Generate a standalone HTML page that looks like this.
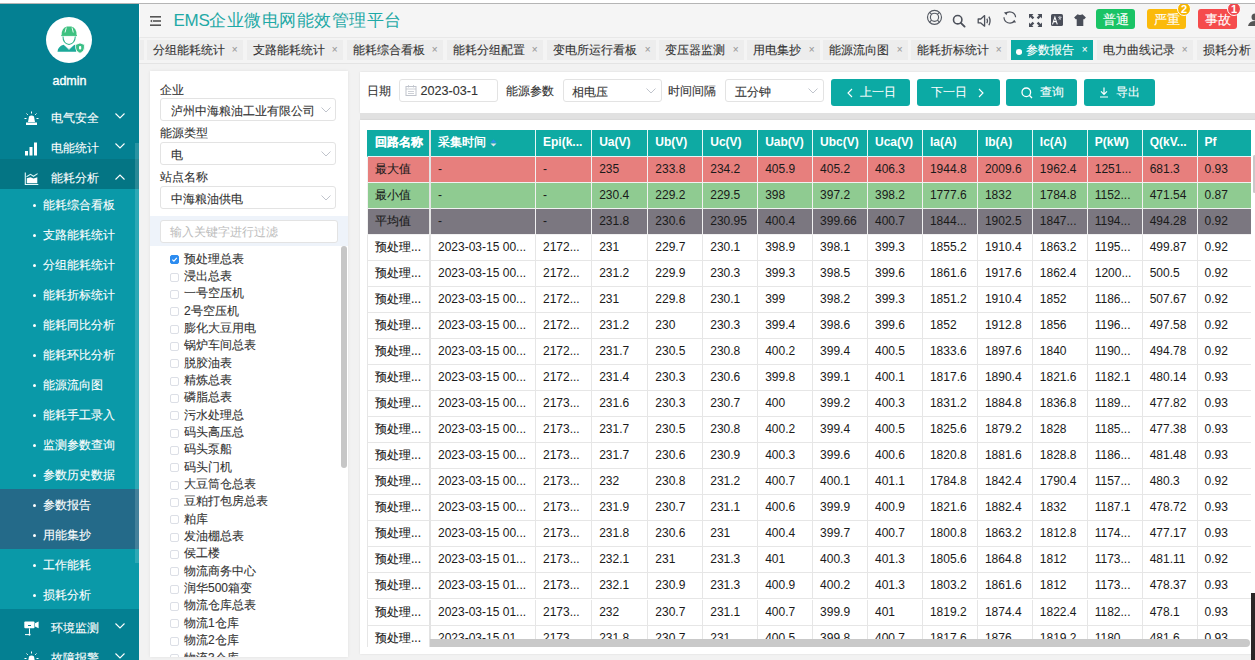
<!DOCTYPE html>
<html><head><meta charset="utf-8">
<style>
*{box-sizing:border-box;margin:0;padding:0}
html,body{width:1255px;height:660px;overflow:hidden;background:#fff;font-family:"Liberation Sans",sans-serif;font-size:12px;color:#333}
.tn,.tab,.lbl,.sel,.tl,.inp span,.c0,.si .t,.mi .t,.btn span,.hbtn{-webkit-text-stroke:.1px currentColor}
.abs{position:absolute}
#topline{left:0;top:3px;width:1255px;height:1px;background:#b5b5b5;z-index:5}
#topwhite{left:0;top:0;width:1255px;height:3px;background:#fff;z-index:5}
#side{left:0;top:4px;width:139px;height:656px;background:#048092;color:#fff;overflow:hidden}
#hdr{left:139px;top:4px;width:1116px;height:34px;background:#f5f5f5;border-left:1px solid #fff;border-bottom:1px solid #e8e8e8}
#tabs{left:139px;top:38px;width:1116px;height:26px;background:#f4f4f4;border-bottom:1px solid #e4e4e4}
#content{left:139px;top:64px;width:1116px;height:596px;background:#f2f2f2}
/* sidebar */
.logo{left:46px;top:13px;width:46px;height:46px;border-radius:50%;background:#fff}
.uname{left:0;top:69px;width:139px;text-align:center;font-size:12.5px;font-weight:normal;line-height:16px;-webkit-text-stroke:.35px #fff}
.mi{left:0;width:139px;height:30px;line-height:30px}
.mi .t{position:absolute;left:51px;top:4px;font-size:12px}
.mi .ic{position:absolute;left:24px;top:12px;width:15px;height:15px}
.mi .ch{position:absolute;left:115px;top:0}
.sub{left:0;top:185px;width:139px;height:420px;background:#0a99a8}
.si{position:absolute;left:0;width:139px;height:30px;line-height:30px}
.si .b{position:absolute;left:33px;top:15px;width:3px;height:3px;border-radius:50%;background:#fff}
.si .t{position:absolute;left:43px;top:1px}
.sact{background:#246a89}
.sbar{left:135px;top:139px;width:4px;height:420px;background:rgba(255,255,255,.15)}

/* header */
.ham{left:150px;top:16px}
.title{left:173.5px;top:8px;font-size:17px;color:#1fa9a6;line-height:26px;white-space:nowrap}
.hi{position:absolute}
.hbtn{position:absolute;top:9px;height:20px;width:39px;border-radius:3px;color:#fff;font-size:13px;line-height:22px;text-align:center}
.badge{position:absolute;width:14px;height:14px;border-radius:50%;border:1px solid #fff;color:#fff;font-size:11px;line-height:12px;text-align:center;font-weight:bold}
/* tabs */
.tab{position:absolute;top:40px;height:20px;background:#ededed;line-height:20px;font-size:12px;color:#333;white-space:nowrap;padding-left:6px}
.tab .x{position:absolute;right:5.5px;top:0;color:#999;font-size:10px}
.tab.act{background:#0caaa4;color:#fff}
.tab.act .x{color:#fff}

/* filter card */
#lcard{left:150px;top:71px;width:198px;height:586px;background:#fff;box-shadow:0 0 3px rgba(0,0,0,.08);overflow:hidden}
.lbl{position:absolute;left:10px;font-size:12px;color:#333;line-height:14px}
.sel{position:absolute;left:10px;width:176px;height:23px;border:1px solid #e3e3e3;border-radius:3px;background:#fff;line-height:24px;padding-left:10px;font-size:12px;color:#333;white-space:nowrap;overflow:hidden}
.sel svg{position:absolute;right:4px;top:8px}
.fband{position:absolute;left:0;top:145px;width:198px;height:30px;background:#eef3fa}
.finp{position:absolute;left:10px;top:3.5px;width:178px;height:23px;border:1px solid #e3e3e3;border-radius:3px;background:#fff;color:#bbb;line-height:22px;padding-left:9px}
.tree{position:absolute;left:0;top:179.7px;width:198px;height:406px;overflow:hidden}
.tn{position:absolute;left:20px;height:17.34px;line-height:17.34px;font-size:12px;color:#333;white-space:nowrap}
.cb{position:absolute;left:0;top:4.5px;width:9px;height:9px;border:1px solid #dcdfe6;border-radius:2px;background:#fff}
.cb.on{background:#2d8cf0;border-color:#2d8cf0}
.tn .tt{position:absolute;left:14px;top:0}
.tsb{position:absolute;left:191px;top:175px;width:6px;height:222px;background:#c6c6c6;border-radius:3px}

/* toolbar */
#tbar{left:360px;top:72px;width:900px;height:41px;background:#fff;box-shadow:0 0 2px rgba(0,0,0,.1)}
#gap{left:360px;top:113px;width:900px;height:7px;background:#e1e1e1}
#tcard{left:360px;top:120px;width:900px;height:534px;background:#fff;box-shadow:0 0 2px rgba(0,0,0,.1)}
.tl{position:absolute;top:0;line-height:39px;font-size:12px;color:#333;white-space:nowrap}
.inp{position:absolute;top:7px;height:23px;border:1px solid #e3e3e3;border-radius:3px;background:#fff;line-height:23px;font-size:12px;color:#333;white-space:nowrap}
.inp svg.cv{position:absolute;right:5px;top:8px}
.btn{position:absolute;top:7px;height:27px;background:#0caaa4;border-radius:3px;color:#fff;font-size:12px;line-height:27px;white-space:nowrap}
.btn svg{position:absolute}
.btn span{position:absolute;top:0}
/* table */
#tbl{left:367px;top:130px;width:884px;height:517px;overflow:hidden}
.row{position:absolute;left:0;height:26.1px;width:884px}
.c{position:absolute;top:0;height:26.1px;line-height:26px;padding-left:7px;white-space:nowrap;overflow:hidden;font-size:12px;color:#1a1a1a;border-right:1px solid #e6e6e6;border-bottom:1px solid #e6e6e6}
.hd .c{background:#0eaaa3;color:#fff;font-weight:bold;border-right:1px solid #e5f6f5;border-bottom:1px solid #e5f6f5}
.rmax .c{background:#e77f7d;border-color:#f1f1f1}
.rmin .c{background:#8fcb91;border-color:#f1f1f1}
.ravg .c{background:#7b7780;border-color:#f1f1f1}
.hscroll{left:430px;top:639px;width:820px;height:8px;background:#c9c9c9;border-radius:0 4px 4px 0}
.bbar{left:1251px;top:593px;width:4px;height:67px;background:#2b2727}
.vscroll{left:1253px;top:155px;width:3px;height:38px;background:#c9c9c9;border-radius:2px}
.c0{border-left:1px solid #e6e6e6;border-right:2px solid #e3e3e3 !important;padding-left:7px}
.hd .c0{border-left-color:#0eaaa3}
.sort{position:absolute;left:59px;top:9px}
</style></head><body>
<div id="topwhite" class="abs"></div><div id="topline" class="abs"></div>
<div id="side" class="abs">
  <div class="abs logo">
    <svg width="44" height="44" viewBox="0 0 44 44" style="position:absolute;left:0.5px;top:1.5px">
      <defs><linearGradient id="g1" x1="0" y1="0" x2="0" y2="1"><stop offset="0" stop-color="#3ec282"/><stop offset="1" stop-color="#17a79b"/></linearGradient></defs>
      <path d="M14.6 16.3 Q14.6 8.6 20 7.6 L24.3 7.6 Q29.6 8.6 29.6 16.3z" fill="#3ec180"/>
      <path d="M19.3 8.5 L18 13.5 M25 8.5 L26.3 13.5" stroke="#fff" stroke-width=".9"/>
      <path d="M14.2 16.6 H30" stroke="#3ec180" stroke-width="1"/>
      <path d="M16 17.5 Q16 24.5 22 25.5 Q28 24.5 28.3 17.5" fill="none" stroke="#2db48b" stroke-width="1.1"/>
      <path d="M10.5 32.8 Q10.8 27.6 16.5 25.8 L22 30 L27.5 25.8 Q28.5 26.2 29.2 26.6 V32.8z" fill="#1ca99a"/>
      <path d="M19 27.3 L22 30.5 L25 27.3" fill="none" stroke="#fff" stroke-width=".8"/>
      <path d="M28.6 25.6 L33 23.9 L37.4 25.6 V29 Q37.4 32.6 33 34.3 Q28.6 32.6 28.6 29z" fill="#3bbf86" stroke="#fff" stroke-width=".8"/>
      <rect x="32" y="27" width="2.2" height="3.6" rx=".8" fill="#fff"/>
    </svg>
  </div>
  <div class="abs uname">admin</div>
  <div class="abs mi" style="top:95px"><svg class="ic" viewBox="0 0 15 15"><path d="M4 11 L5 5.5 Q7.5 3.5 10 5.5 L11 11z" fill="#fff"/><rect x="2" y="11.5" width="11" height="2.5" fill="#fff"/><path d="M7.5 0.5v2M2.5 2.5l1.3 1.3M12.5 2.5l-1.3 1.3M0.5 7.5h2M12.5 7.5h2" stroke="#fff" stroke-width="1"/></svg><span class="t">电气安全</span><svg class="ch" style="top:14px" width="10" height="6" viewBox="0 0 10 6"><path d="M0.5 0.5 L5 5 L9.5 0.5" fill="none" stroke="#fff" stroke-width="1.1"/></svg></div>
  <div class="abs mi" style="top:125px"><svg class="ic" viewBox="0 0 15 15"><rect x="1" y="10" width="3" height="4.5" fill="#fff"/><rect x="5.5" y="6" width="3" height="8.5" fill="#fff"/><rect x="10" y="1.5" width="3" height="13" fill="#fff"/></svg><span class="t">电能统计</span><svg class="ch" style="top:14px" width="10" height="6" viewBox="0 0 10 6"><path d="M0.5 0.5 L5 5 L9.5 0.5" fill="none" stroke="#fff" stroke-width="1.1"/></svg></div>
  <div class="abs mi" style="top:155px;background:#047584"><svg class="ic" style="top:13px" viewBox="0 0 15 15"><path d="M1.3 0.5 V12.5 H14.3" fill="none" stroke="#e6fbfb" stroke-width="1.1"/><path d="M2.5 4.8 L6.5 2.3 L9.5 4.3 L13.6 1.6" fill="none" stroke="#d8f6f6" stroke-width="1.1"/><path d="M2.8 11.2 V6.3 L6.5 5.2 L9.5 6.4 L13.3 5.2 V11.2z" fill="#fff"/></svg><span class="t">能耗分析</span><svg class="ch" style="top:15px" width="10" height="6" viewBox="0 0 10 6"><path d="M0.5 5.5 L5 1 L9.5 5.5" fill="none" stroke="#fff" stroke-width="1.1"/></svg></div>
  <div class="abs sub">
    <div class="si" style="top:0"><i class="b"></i><span class="t">能耗综合看板</span></div>
    <div class="si" style="top:30px"><i class="b"></i><span class="t">支路能耗统计</span></div>
    <div class="si" style="top:60px"><i class="b"></i><span class="t">分组能耗统计</span></div>
    <div class="si" style="top:90px"><i class="b"></i><span class="t">能耗折标统计</span></div>
    <div class="si" style="top:120px"><i class="b"></i><span class="t">能耗同比分析</span></div>
    <div class="si" style="top:150px"><i class="b"></i><span class="t">能耗环比分析</span></div>
    <div class="si" style="top:180px"><i class="b"></i><span class="t">能源流向图</span></div>
    <div class="si" style="top:210px"><i class="b"></i><span class="t">能耗手工录入</span></div>
    <div class="si" style="top:240px"><i class="b"></i><span class="t">监测参数查询</span></div>
    <div class="si" style="top:270px"><i class="b"></i><span class="t">参数历史数据</span></div>
    <div class="si sact" style="top:300px"><i class="b"></i><span class="t">参数报告</span></div>
    <div class="si sact" style="top:330px"><i class="b"></i><span class="t">用能集抄</span></div>
    <div class="si" style="top:360px"><i class="b"></i><span class="t">工作能耗</span></div>
    <div class="si" style="top:390px"><i class="b"></i><span class="t">损耗分析</span></div>
  </div>
  <div class="abs sbar"></div>
  <div class="abs mi" style="top:605px"><svg class="ic" viewBox="0 0 15 15"><rect x="0.3" y="0.5" width="10.2" height="6.8" rx="1" fill="#fff"/><rect x="4" y="4" width="3" height="1" fill="#048092"/><path d="M11 2.2 L14.6 0.6 V7.2 L11 5.6z" fill="#fff"/><rect x="5" y="7.3" width="1" height="5.5" fill="#fff"/><circle cx="5.5" cy="13.6" r="1.1" fill="#fff"/><rect x="1" y="13.1" width="4" height="1" fill="#fff"/></svg><span class="t">环境监测</span><svg class="ch" style="top:14px" width="10" height="6" viewBox="0 0 10 6"><path d="M0.5 0.5 L5 5 L9.5 0.5" fill="none" stroke="#fff" stroke-width="1.1"/></svg></div>
  <div class="abs mi" style="top:635px"><svg class="ic" viewBox="0 0 15 15"><path d="M4 11 L5 5.5 Q7.5 3.5 10 5.5 L11 11z" fill="#fff"/><rect x="2" y="11.5" width="11" height="2.5" fill="#fff"/><path d="M7.5 0.5v2M2.5 2.5l1.3 1.3M12.5 2.5l-1.3 1.3M0.5 7.5h2M12.5 7.5h2" stroke="#fff" stroke-width="1"/></svg><span class="t">故障报警</span><svg class="ch" style="top:14px" width="10" height="6" viewBox="0 0 10 6"><path d="M0.5 0.5 L5 5 L9.5 0.5" fill="none" stroke="#fff" stroke-width="1.1"/></svg></div>
</div>
<div id="hdr" class="abs"></div>
<div id="tabs" class="abs"></div>
<div id="content" class="abs"></div>

<svg class="abs ham" width="12" height="10" viewBox="0 0 12 10"><rect x="0" y="0" width="11" height="1.6" fill="#555"/><rect x="3" y="4.2" width="8" height="1.6" fill="#555"/><rect x="0" y="8.4" width="11" height="1.6" fill="#555"/><path d="M0 5 L2.2 3.4 V6.6z" fill="#555"/></svg>
<div class="abs title"><span style="letter-spacing:-0.3px">EMS</span><span style="letter-spacing:0.45px">企业微电网能效管理平台</span></div>
<svg class="hi" style="left:926px;top:9px" width="17" height="17" viewBox="0 0 17 17"><g fill="none" stroke="#555a63" stroke-width="1.15"><circle cx="8.5" cy="8.3" r="7"/><circle cx="8.5" cy="8.3" r="4.1"/><path d="M3.6 3.4l2 2M13.4 3.4l-2 2M3.6 13.2l2-2M13.4 13.2l-2-2"/></g></svg>
<svg class="hi" style="left:952px;top:14px" width="14" height="14" viewBox="0 0 14 14"><circle cx="5.7" cy="5.7" r="4.2" fill="none" stroke="#4d515b" stroke-width="1.6"/><path d="M8.8 8.8 L12.6 12.6" stroke="#4d515b" stroke-width="1.9" stroke-linecap="round"/></svg>
<svg class="hi" style="left:977px;top:14px" width="15" height="14" viewBox="0 0 15 14"><path d="M1.2 5 H3.8 L7.6 1.6 V12.2 L3.8 8.9 H1.2z" fill="none" stroke="#4d515b" stroke-width="1.3" stroke-linejoin="round"/><path d="M9.9 4.6 Q11.1 6.9 9.9 9.2" fill="none" stroke="#4d515b" stroke-width="1.3"/><path d="M11.9 2.6 Q14.2 6.9 11.9 11.2" fill="none" stroke="#4d515b" stroke-width="1.3"/></svg>
<svg class="hi" style="left:1003px;top:10px" width="14" height="15" viewBox="0 0 14 15"><g fill="none" stroke="#4d515b" stroke-width="1.2"><path d="M2.6 3.8 A5.8 5.8 0 0 1 12.6 7.3"/><path d="M1 7.3 A5.8 5.8 0 0 0 11.3 11"/></g><path d="M0.9 2.6 L4.3 1.8 L3.6 5.2z" fill="#4d515b"/><path d="M13.1 12.4 L9.7 12.6 L11.3 9.7z" fill="#4d515b"/></svg>
<svg class="hi" style="left:1028.5px;top:13.5px" width="13" height="13" viewBox="0 0 13 13"><g fill="#4a4e59"><path d="M0 0 H4.5 L3.1 1.4 L5.3 3.6 L3.6 5.3 L1.4 3.1 L0 4.5z"/><path d="M13 0 V4.5 L11.6 3.1 L9.4 5.3 L7.7 3.6 L9.9 1.4 L8.5 0z"/><path d="M0 13 V8.5 L1.4 9.9 L3.6 7.7 L5.3 9.4 L3.1 11.6 L4.5 13z"/><path d="M13 13 H8.5 L9.9 11.6 L7.7 9.4 L9.4 7.7 L11.6 9.9 L13 8.5z"/></g></svg>
<svg class="hi" style="left:1051px;top:13.8px" width="12" height="12" viewBox="0 0 12 12"><rect x="0" y="0" width="12" height="12" rx="1.6" fill="#4a4e59"/><path d="M1.5 10.3 L3.9 3.2 L6.3 10.3 M2.5 7.6 H5.3" fill="none" stroke="#fff" stroke-width="1.05"/><path d="M7 3.3 H10.7 M8.85 2 V3.3 M7.6 5.6 L10.2 3.6 M7.8 3.8 L10 5.6" fill="none" stroke="#e8e8ee" stroke-width=".7"/></svg>
<svg class="hi" style="left:1074px;top:13.8px" width="12" height="12" viewBox="0 0 12 12"><path d="M3.6 0.3 Q6 1.8 8.4 0.3 L11.9 3.6 L10 5.4 L9.3 4.9 V11.9 H2.7 V4.9 L2 5.4 L0.1 3.6z" fill="#4a4e59"/></svg>
<div class="hbtn" style="left:1096px;background:#19c365">普通</div>
<div class="hbtn" style="left:1147px;background:#fbba0b">严重</div>
<div class="badge" style="left:1177px;top:1.7px;background:#f8b500">2</div>
<div class="hbtn" style="left:1198px;background:#f54b4c">事故</div>
<div class="badge" style="left:1227px;top:1.7px;background:#f0484d">1</div>
<svg class="hi" style="left:1247px;top:13px" width="10" height="14" viewBox="0 0 10 14"><circle cx="8" cy="4" r="3.5" fill="#555"/><path d="M1 13 Q2 8 8 8 Q14 8 15 13z" fill="#555"/></svg>
<div class="tab" style="left:140px;width:4px;padding:0"></div>
<div class="tab" style="left:147px;width:96px">分组能耗统计<span class="x">×</span></div>
<div class="tab" style="left:247px;width:96px">支路能耗统计<span class="x">×</span></div>
<div class="tab" style="left:347px;width:96px">能耗综合看板<span class="x">×</span></div>
<div class="tab" style="left:447px;width:96px">能耗分组配置<span class="x">×</span></div>
<div class="tab" style="left:547px;width:109px">变电所运行看板<span class="x">×</span></div>
<div class="tab" style="left:659px;width:85px">变压器监测<span class="x">×</span></div>
<div class="tab" style="left:747px;width:73px">用电集抄<span class="x">×</span></div>
<div class="tab" style="left:823px;width:85px">能源流向图<span class="x">×</span></div>
<div class="tab" style="left:911px;width:96px">能耗折标统计<span class="x">×</span></div>
<div class="tab act" style="left:1011px;width:82px;padding-left:15px"><i style="position:absolute;left:5px;top:9.3px;width:6px;height:5.3px;border-radius:50%;background:#fff"></i>参数报告<span class="x">×</span></div>
<div class="tab" style="left:1097px;width:96px">电力曲线记录<span class="x">×</span></div>
<div class="tab" style="left:1197px;width:80px">损耗分析<span class="x">×</span></div>


<div id="lcard" class="abs">
  <div class="lbl" style="top:12px">企业</div>
  <div class="sel" style="top:27px">泸州中海粮油工业有限公司<svg width="10" height="6" viewBox="0 0 10 6"><path d="M0.5 0.5 L5 5 L9.5 0.5" fill="none" stroke="#c0c4cc" stroke-width="1"/></svg></div>
  <div class="lbl" style="top:55px">能源类型</div>
  <div class="sel" style="top:71px">电<svg width="10" height="6" viewBox="0 0 10 6"><path d="M0.5 0.5 L5 5 L9.5 0.5" fill="none" stroke="#c0c4cc" stroke-width="1"/></svg></div>
  <div class="lbl" style="top:99px">站点名称</div>
  <div class="sel" style="top:115px">中海粮油供电<svg width="10" height="6" viewBox="0 0 10 6"><path d="M0.5 0.5 L5 5 L9.5 0.5" fill="none" stroke="#c0c4cc" stroke-width="1"/></svg></div>
  <div class="fband"><div class="finp">输入关键字进行过滤</div></div>
  <div class="tree"><div class="tn" style="top:0.00px"><i class="cb on"><svg style="position:absolute;left:0;top:0" width="7" height="7" viewBox="0 0 7 7"><path d="M1.3 3.6 L2.9 5.1 L5.8 1.9" fill="none" stroke="#fff" stroke-width="1.2"/></svg></i><span class="tt">预处理总表</span></div>
<div class="tn" style="top:17.34px"><i class="cb"></i><span class="tt">浸出总表</span></div>
<div class="tn" style="top:34.68px"><i class="cb"></i><span class="tt">一号空压机</span></div>
<div class="tn" style="top:52.02px"><i class="cb"></i><span class="tt">2号空压机</span></div>
<div class="tn" style="top:69.36px"><i class="cb"></i><span class="tt">膨化大豆用电</span></div>
<div class="tn" style="top:86.70px"><i class="cb"></i><span class="tt">锅炉车间总表</span></div>
<div class="tn" style="top:104.04px"><i class="cb"></i><span class="tt">脱胶油表</span></div>
<div class="tn" style="top:121.38px"><i class="cb"></i><span class="tt">精炼总表</span></div>
<div class="tn" style="top:138.72px"><i class="cb"></i><span class="tt">磷脂总表</span></div>
<div class="tn" style="top:156.06px"><i class="cb"></i><span class="tt">污水处理总</span></div>
<div class="tn" style="top:173.40px"><i class="cb"></i><span class="tt">码头高压总</span></div>
<div class="tn" style="top:190.74px"><i class="cb"></i><span class="tt">码头泵船</span></div>
<div class="tn" style="top:208.08px"><i class="cb"></i><span class="tt">码头门机</span></div>
<div class="tn" style="top:225.42px"><i class="cb"></i><span class="tt">大豆筒仓总表</span></div>
<div class="tn" style="top:242.76px"><i class="cb"></i><span class="tt">豆粕打包房总表</span></div>
<div class="tn" style="top:260.10px"><i class="cb"></i><span class="tt">粕库</span></div>
<div class="tn" style="top:277.44px"><i class="cb"></i><span class="tt">发油棚总表</span></div>
<div class="tn" style="top:294.78px"><i class="cb"></i><span class="tt">侯工楼</span></div>
<div class="tn" style="top:312.12px"><i class="cb"></i><span class="tt">物流商务中心</span></div>
<div class="tn" style="top:329.46px"><i class="cb"></i><span class="tt">润华500箱变</span></div>
<div class="tn" style="top:346.80px"><i class="cb"></i><span class="tt">物流仓库总表</span></div>
<div class="tn" style="top:364.14px"><i class="cb"></i><span class="tt">物流1仓库</span></div>
<div class="tn" style="top:381.48px"><i class="cb"></i><span class="tt">物流2仓库</span></div>
<div class="tn" style="top:398.82px"><i class="cb"></i><span class="tt">物流3仓库</span></div>
</div>
  <div class="tsb"></div>
</div>

<div id="tbar" class="abs">
  <span class="tl" style="left:6.5px">日期</span>
  <div class="inp" style="left:39px;width:99px"><svg style="position:absolute;left:5px;top:5px" width="12" height="11" viewBox="0 0 12 11"><rect x="1" y="1.5" width="10" height="9" fill="none" stroke="#c0c4cc" stroke-width="1"/><path d="M1 4h10M3.5 0v2.5M8.5 0v2.5M3 6.5h6M3 8.5h6" stroke="#c0c4cc" stroke-width=".8"/></svg><span style="position:absolute;left:20.5px;top:-0.5px;font-size:12.6px">2023-03-1</span></div>
  <span class="tl" style="left:146px">能源参数</span>
  <div class="inp" style="left:202.5px;width:99px"><span style="position:absolute;left:8.5px;top:1px">相电压</span><svg class="cv" width="10" height="6" viewBox="0 0 10 6"><path d="M0.5 0.5 L5 5 L9.5 0.5" fill="none" stroke="#c0c4cc" stroke-width="1"/></svg></div>
  <span class="tl" style="left:308px">时间间隔</span>
  <div class="inp" style="left:364.5px;width:99px"><span style="position:absolute;left:9.5px;top:1px">五分钟</span><svg class="cv" width="10" height="6" viewBox="0 0 10 6"><path d="M0.5 0.5 L5 5 L9.5 0.5" fill="none" stroke="#c0c4cc" stroke-width="1"/></svg></div>
  <div class="btn" style="left:471px;width:79px"><svg style="left:16px;top:9px" width="6" height="10" viewBox="0 0 6 10"><path d="M5 1 L1 5 L5 9" fill="none" stroke="#fff" stroke-width="1.1"/></svg><span style="left:29px">上一日</span></div>
  <div class="btn" style="left:557px;width:83px"><span style="left:14px">下一日</span><svg style="left:61px;top:9px" width="6" height="10" viewBox="0 0 6 10"><path d="M1 1 L5 5 L1 9" fill="none" stroke="#fff" stroke-width="1.1"/></svg></div>
  <div class="btn" style="left:646px;width:71px"><svg style="left:15px;top:8px" width="12" height="12" viewBox="0 0 12 12"><circle cx="5.3" cy="5.3" r="4.3" fill="none" stroke="#fff" stroke-width="1.3"/><path d="M8.3 8.3 L11 11" stroke="#fff" stroke-width="1.3"/></svg><span style="left:34px">查询</span></div>
  <div class="btn" style="left:724px;width:71px"><svg style="left:15px;top:8px" width="10" height="11" viewBox="0 0 10 11"><path d="M5 0.5 V7 M2 4.3 L5 7.3 L8 4.3 M1 10 H9" fill="none" stroke="#fff" stroke-width="1.2"/></svg><span style="left:32px">导出</span></div>
</div>
<div id="gap" class="abs"></div>
<div id="tcard" class="abs"></div>
<!--TBL--><div id="tbl" class="abs"><div class="row hd" style="top:0.00px;height:27px"><div class="c c0" style="left:0px;width:64.0px;height:27px;line-height:25.00px">回路名称</div><div class="c" style="left:64.0px;width:105.0px;height:27px;line-height:25.00px">采集时间<svg class="sort" width="7" height="8" viewBox="0 0 7 8"><path d="M3.5 0.5 L6.5 3.5 H0.5z" fill="#2d8cf0"/><path d="M0.5 4.5 H6.5 L3.5 7.5z" fill="#dde3ea"/></svg></div><div class="c" style="left:169.0px;width:56.2px;height:27px;line-height:25.00px">Epi(k...</div><div class="c" style="left:225.2px;width:56.1px;height:27px;line-height:25.00px">Ua(V)</div><div class="c" style="left:281.3px;width:54.93px;height:27px;line-height:25.00px">Ub(V)</div><div class="c" style="left:336.23px;width:54.93px;height:27px;line-height:25.00px">Uc(V)</div><div class="c" style="left:391.16px;width:54.93px;height:27px;line-height:25.00px">Uab(V)</div><div class="c" style="left:446.09px;width:54.93px;height:27px;line-height:25.00px">Ubc(V)</div><div class="c" style="left:501.02px;width:54.93px;height:27px;line-height:25.00px">Uca(V)</div><div class="c" style="left:555.95px;width:54.93px;height:27px;line-height:25.00px">Ia(A)</div><div class="c" style="left:610.88px;width:54.93px;height:27px;line-height:25.00px">Ib(A)</div><div class="c" style="left:665.81px;width:54.93px;height:27px;line-height:25.00px">Ic(A)</div><div class="c" style="left:720.74px;width:54.93px;height:27px;line-height:25.00px">P(kW)</div><div class="c" style="left:775.67px;width:54.93px;height:27px;line-height:25.00px">Q(kV...</div><div class="c" style="left:830.6px;width:55.93px;height:27px;line-height:25.00px">Pf</div></div>
<div class="row rmax" style="top:27.00px;height:26.03px"><div class="c c0" style="left:0px;width:64.0px;height:26.03px;line-height:24.03px">最大值</div><div class="c" style="left:64.0px;width:105.0px;height:26.03px;line-height:24.03px">-</div><div class="c" style="left:169.0px;width:56.2px;height:26.03px;line-height:24.03px">-</div><div class="c" style="left:225.2px;width:56.1px;height:26.03px;line-height:24.03px">235</div><div class="c" style="left:281.3px;width:54.93px;height:26.03px;line-height:24.03px">233.8</div><div class="c" style="left:336.23px;width:54.93px;height:26.03px;line-height:24.03px">234.2</div><div class="c" style="left:391.16px;width:54.93px;height:26.03px;line-height:24.03px">405.9</div><div class="c" style="left:446.09px;width:54.93px;height:26.03px;line-height:24.03px">405.2</div><div class="c" style="left:501.02px;width:54.93px;height:26.03px;line-height:24.03px">406.3</div><div class="c" style="left:555.95px;width:54.93px;height:26.03px;line-height:24.03px">1944.8</div><div class="c" style="left:610.88px;width:54.93px;height:26.03px;line-height:24.03px">2009.6</div><div class="c" style="left:665.81px;width:54.93px;height:26.03px;line-height:24.03px">1962.4</div><div class="c" style="left:720.74px;width:54.93px;height:26.03px;line-height:24.03px">1251...</div><div class="c" style="left:775.67px;width:54.93px;height:26.03px;line-height:24.03px">681.3</div><div class="c" style="left:830.6px;width:55.93px;height:26.03px;line-height:24.03px">0.93</div></div>
<div class="row rmin" style="top:53.03px;height:26.03px"><div class="c c0" style="left:0px;width:64.0px;height:26.03px;line-height:24.03px">最小值</div><div class="c" style="left:64.0px;width:105.0px;height:26.03px;line-height:24.03px">-</div><div class="c" style="left:169.0px;width:56.2px;height:26.03px;line-height:24.03px">-</div><div class="c" style="left:225.2px;width:56.1px;height:26.03px;line-height:24.03px">230.4</div><div class="c" style="left:281.3px;width:54.93px;height:26.03px;line-height:24.03px">229.2</div><div class="c" style="left:336.23px;width:54.93px;height:26.03px;line-height:24.03px">229.5</div><div class="c" style="left:391.16px;width:54.93px;height:26.03px;line-height:24.03px">398</div><div class="c" style="left:446.09px;width:54.93px;height:26.03px;line-height:24.03px">397.2</div><div class="c" style="left:501.02px;width:54.93px;height:26.03px;line-height:24.03px">398.2</div><div class="c" style="left:555.95px;width:54.93px;height:26.03px;line-height:24.03px">1777.6</div><div class="c" style="left:610.88px;width:54.93px;height:26.03px;line-height:24.03px">1832</div><div class="c" style="left:665.81px;width:54.93px;height:26.03px;line-height:24.03px">1784.8</div><div class="c" style="left:720.74px;width:54.93px;height:26.03px;line-height:24.03px">1152...</div><div class="c" style="left:775.67px;width:54.93px;height:26.03px;line-height:24.03px">471.54</div><div class="c" style="left:830.6px;width:55.93px;height:26.03px;line-height:24.03px">0.87</div></div>
<div class="row ravg" style="top:79.06px;height:26.03px"><div class="c c0" style="left:0px;width:64.0px;height:26.03px;line-height:24.03px">平均值</div><div class="c" style="left:64.0px;width:105.0px;height:26.03px;line-height:24.03px">-</div><div class="c" style="left:169.0px;width:56.2px;height:26.03px;line-height:24.03px">-</div><div class="c" style="left:225.2px;width:56.1px;height:26.03px;line-height:24.03px">231.8</div><div class="c" style="left:281.3px;width:54.93px;height:26.03px;line-height:24.03px">230.6</div><div class="c" style="left:336.23px;width:54.93px;height:26.03px;line-height:24.03px">230.95</div><div class="c" style="left:391.16px;width:54.93px;height:26.03px;line-height:24.03px">400.4</div><div class="c" style="left:446.09px;width:54.93px;height:26.03px;line-height:24.03px">399.66</div><div class="c" style="left:501.02px;width:54.93px;height:26.03px;line-height:24.03px">400.7</div><div class="c" style="left:555.95px;width:54.93px;height:26.03px;line-height:24.03px">1844...</div><div class="c" style="left:610.88px;width:54.93px;height:26.03px;line-height:24.03px">1902.5</div><div class="c" style="left:665.81px;width:54.93px;height:26.03px;line-height:24.03px">1847...</div><div class="c" style="left:720.74px;width:54.93px;height:26.03px;line-height:24.03px">1194...</div><div class="c" style="left:775.67px;width:54.93px;height:26.03px;line-height:24.03px">494.28</div><div class="c" style="left:830.6px;width:55.93px;height:26.03px;line-height:24.03px">0.92</div></div>
<div class="row " style="top:105.09px;height:26.03px"><div class="c c0" style="left:0px;width:64.0px;height:26.03px;line-height:24.03px">预处理...</div><div class="c" style="left:64.0px;width:105.0px;height:26.03px;line-height:24.03px">2023-03-15 00...</div><div class="c" style="left:169.0px;width:56.2px;height:26.03px;line-height:24.03px">2172...</div><div class="c" style="left:225.2px;width:56.1px;height:26.03px;line-height:24.03px">231</div><div class="c" style="left:281.3px;width:54.93px;height:26.03px;line-height:24.03px">229.7</div><div class="c" style="left:336.23px;width:54.93px;height:26.03px;line-height:24.03px">230.1</div><div class="c" style="left:391.16px;width:54.93px;height:26.03px;line-height:24.03px">398.9</div><div class="c" style="left:446.09px;width:54.93px;height:26.03px;line-height:24.03px">398.1</div><div class="c" style="left:501.02px;width:54.93px;height:26.03px;line-height:24.03px">399.3</div><div class="c" style="left:555.95px;width:54.93px;height:26.03px;line-height:24.03px">1855.2</div><div class="c" style="left:610.88px;width:54.93px;height:26.03px;line-height:24.03px">1910.4</div><div class="c" style="left:665.81px;width:54.93px;height:26.03px;line-height:24.03px">1863.2</div><div class="c" style="left:720.74px;width:54.93px;height:26.03px;line-height:24.03px">1195...</div><div class="c" style="left:775.67px;width:54.93px;height:26.03px;line-height:24.03px">499.87</div><div class="c" style="left:830.6px;width:55.93px;height:26.03px;line-height:24.03px">0.92</div></div>
<div class="row " style="top:131.12px;height:26.03px"><div class="c c0" style="left:0px;width:64.0px;height:26.03px;line-height:24.03px">预处理...</div><div class="c" style="left:64.0px;width:105.0px;height:26.03px;line-height:24.03px">2023-03-15 00...</div><div class="c" style="left:169.0px;width:56.2px;height:26.03px;line-height:24.03px">2172...</div><div class="c" style="left:225.2px;width:56.1px;height:26.03px;line-height:24.03px">231.2</div><div class="c" style="left:281.3px;width:54.93px;height:26.03px;line-height:24.03px">229.9</div><div class="c" style="left:336.23px;width:54.93px;height:26.03px;line-height:24.03px">230.3</div><div class="c" style="left:391.16px;width:54.93px;height:26.03px;line-height:24.03px">399.3</div><div class="c" style="left:446.09px;width:54.93px;height:26.03px;line-height:24.03px">398.5</div><div class="c" style="left:501.02px;width:54.93px;height:26.03px;line-height:24.03px">399.6</div><div class="c" style="left:555.95px;width:54.93px;height:26.03px;line-height:24.03px">1861.6</div><div class="c" style="left:610.88px;width:54.93px;height:26.03px;line-height:24.03px">1917.6</div><div class="c" style="left:665.81px;width:54.93px;height:26.03px;line-height:24.03px">1862.4</div><div class="c" style="left:720.74px;width:54.93px;height:26.03px;line-height:24.03px">1200...</div><div class="c" style="left:775.67px;width:54.93px;height:26.03px;line-height:24.03px">500.5</div><div class="c" style="left:830.6px;width:55.93px;height:26.03px;line-height:24.03px">0.92</div></div>
<div class="row " style="top:157.15px;height:26.03px"><div class="c c0" style="left:0px;width:64.0px;height:26.03px;line-height:24.03px">预处理...</div><div class="c" style="left:64.0px;width:105.0px;height:26.03px;line-height:24.03px">2023-03-15 00...</div><div class="c" style="left:169.0px;width:56.2px;height:26.03px;line-height:24.03px">2172...</div><div class="c" style="left:225.2px;width:56.1px;height:26.03px;line-height:24.03px">231</div><div class="c" style="left:281.3px;width:54.93px;height:26.03px;line-height:24.03px">229.8</div><div class="c" style="left:336.23px;width:54.93px;height:26.03px;line-height:24.03px">230.1</div><div class="c" style="left:391.16px;width:54.93px;height:26.03px;line-height:24.03px">399</div><div class="c" style="left:446.09px;width:54.93px;height:26.03px;line-height:24.03px">398.2</div><div class="c" style="left:501.02px;width:54.93px;height:26.03px;line-height:24.03px">399.3</div><div class="c" style="left:555.95px;width:54.93px;height:26.03px;line-height:24.03px">1851.2</div><div class="c" style="left:610.88px;width:54.93px;height:26.03px;line-height:24.03px">1910.4</div><div class="c" style="left:665.81px;width:54.93px;height:26.03px;line-height:24.03px">1852</div><div class="c" style="left:720.74px;width:54.93px;height:26.03px;line-height:24.03px">1186...</div><div class="c" style="left:775.67px;width:54.93px;height:26.03px;line-height:24.03px">507.67</div><div class="c" style="left:830.6px;width:55.93px;height:26.03px;line-height:24.03px">0.92</div></div>
<div class="row " style="top:183.18px;height:26.03px"><div class="c c0" style="left:0px;width:64.0px;height:26.03px;line-height:24.03px">预处理...</div><div class="c" style="left:64.0px;width:105.0px;height:26.03px;line-height:24.03px">2023-03-15 00...</div><div class="c" style="left:169.0px;width:56.2px;height:26.03px;line-height:24.03px">2172...</div><div class="c" style="left:225.2px;width:56.1px;height:26.03px;line-height:24.03px">231.2</div><div class="c" style="left:281.3px;width:54.93px;height:26.03px;line-height:24.03px">230</div><div class="c" style="left:336.23px;width:54.93px;height:26.03px;line-height:24.03px">230.3</div><div class="c" style="left:391.16px;width:54.93px;height:26.03px;line-height:24.03px">399.4</div><div class="c" style="left:446.09px;width:54.93px;height:26.03px;line-height:24.03px">398.6</div><div class="c" style="left:501.02px;width:54.93px;height:26.03px;line-height:24.03px">399.6</div><div class="c" style="left:555.95px;width:54.93px;height:26.03px;line-height:24.03px">1852</div><div class="c" style="left:610.88px;width:54.93px;height:26.03px;line-height:24.03px">1912.8</div><div class="c" style="left:665.81px;width:54.93px;height:26.03px;line-height:24.03px">1856</div><div class="c" style="left:720.74px;width:54.93px;height:26.03px;line-height:24.03px">1196...</div><div class="c" style="left:775.67px;width:54.93px;height:26.03px;line-height:24.03px">497.58</div><div class="c" style="left:830.6px;width:55.93px;height:26.03px;line-height:24.03px">0.92</div></div>
<div class="row " style="top:209.21px;height:26.03px"><div class="c c0" style="left:0px;width:64.0px;height:26.03px;line-height:24.03px">预处理...</div><div class="c" style="left:64.0px;width:105.0px;height:26.03px;line-height:24.03px">2023-03-15 00...</div><div class="c" style="left:169.0px;width:56.2px;height:26.03px;line-height:24.03px">2172...</div><div class="c" style="left:225.2px;width:56.1px;height:26.03px;line-height:24.03px">231.7</div><div class="c" style="left:281.3px;width:54.93px;height:26.03px;line-height:24.03px">230.5</div><div class="c" style="left:336.23px;width:54.93px;height:26.03px;line-height:24.03px">230.8</div><div class="c" style="left:391.16px;width:54.93px;height:26.03px;line-height:24.03px">400.2</div><div class="c" style="left:446.09px;width:54.93px;height:26.03px;line-height:24.03px">399.4</div><div class="c" style="left:501.02px;width:54.93px;height:26.03px;line-height:24.03px">400.5</div><div class="c" style="left:555.95px;width:54.93px;height:26.03px;line-height:24.03px">1833.6</div><div class="c" style="left:610.88px;width:54.93px;height:26.03px;line-height:24.03px">1897.6</div><div class="c" style="left:665.81px;width:54.93px;height:26.03px;line-height:24.03px">1840</div><div class="c" style="left:720.74px;width:54.93px;height:26.03px;line-height:24.03px">1190...</div><div class="c" style="left:775.67px;width:54.93px;height:26.03px;line-height:24.03px">494.78</div><div class="c" style="left:830.6px;width:55.93px;height:26.03px;line-height:24.03px">0.92</div></div>
<div class="row " style="top:235.24px;height:26.03px"><div class="c c0" style="left:0px;width:64.0px;height:26.03px;line-height:24.03px">预处理...</div><div class="c" style="left:64.0px;width:105.0px;height:26.03px;line-height:24.03px">2023-03-15 00...</div><div class="c" style="left:169.0px;width:56.2px;height:26.03px;line-height:24.03px">2172...</div><div class="c" style="left:225.2px;width:56.1px;height:26.03px;line-height:24.03px">231.4</div><div class="c" style="left:281.3px;width:54.93px;height:26.03px;line-height:24.03px">230.3</div><div class="c" style="left:336.23px;width:54.93px;height:26.03px;line-height:24.03px">230.6</div><div class="c" style="left:391.16px;width:54.93px;height:26.03px;line-height:24.03px">399.8</div><div class="c" style="left:446.09px;width:54.93px;height:26.03px;line-height:24.03px">399.1</div><div class="c" style="left:501.02px;width:54.93px;height:26.03px;line-height:24.03px">400.1</div><div class="c" style="left:555.95px;width:54.93px;height:26.03px;line-height:24.03px">1817.6</div><div class="c" style="left:610.88px;width:54.93px;height:26.03px;line-height:24.03px">1890.4</div><div class="c" style="left:665.81px;width:54.93px;height:26.03px;line-height:24.03px">1821.6</div><div class="c" style="left:720.74px;width:54.93px;height:26.03px;line-height:24.03px">1182.1</div><div class="c" style="left:775.67px;width:54.93px;height:26.03px;line-height:24.03px">480.14</div><div class="c" style="left:830.6px;width:55.93px;height:26.03px;line-height:24.03px">0.93</div></div>
<div class="row " style="top:261.27px;height:26.03px"><div class="c c0" style="left:0px;width:64.0px;height:26.03px;line-height:24.03px">预处理...</div><div class="c" style="left:64.0px;width:105.0px;height:26.03px;line-height:24.03px">2023-03-15 00...</div><div class="c" style="left:169.0px;width:56.2px;height:26.03px;line-height:24.03px">2173...</div><div class="c" style="left:225.2px;width:56.1px;height:26.03px;line-height:24.03px">231.6</div><div class="c" style="left:281.3px;width:54.93px;height:26.03px;line-height:24.03px">230.3</div><div class="c" style="left:336.23px;width:54.93px;height:26.03px;line-height:24.03px">230.7</div><div class="c" style="left:391.16px;width:54.93px;height:26.03px;line-height:24.03px">400</div><div class="c" style="left:446.09px;width:54.93px;height:26.03px;line-height:24.03px">399.2</div><div class="c" style="left:501.02px;width:54.93px;height:26.03px;line-height:24.03px">400.3</div><div class="c" style="left:555.95px;width:54.93px;height:26.03px;line-height:24.03px">1831.2</div><div class="c" style="left:610.88px;width:54.93px;height:26.03px;line-height:24.03px">1884.8</div><div class="c" style="left:665.81px;width:54.93px;height:26.03px;line-height:24.03px">1836.8</div><div class="c" style="left:720.74px;width:54.93px;height:26.03px;line-height:24.03px">1189...</div><div class="c" style="left:775.67px;width:54.93px;height:26.03px;line-height:24.03px">477.82</div><div class="c" style="left:830.6px;width:55.93px;height:26.03px;line-height:24.03px">0.93</div></div>
<div class="row " style="top:287.30px;height:26.03px"><div class="c c0" style="left:0px;width:64.0px;height:26.03px;line-height:24.03px">预处理...</div><div class="c" style="left:64.0px;width:105.0px;height:26.03px;line-height:24.03px">2023-03-15 00...</div><div class="c" style="left:169.0px;width:56.2px;height:26.03px;line-height:24.03px">2173...</div><div class="c" style="left:225.2px;width:56.1px;height:26.03px;line-height:24.03px">231.7</div><div class="c" style="left:281.3px;width:54.93px;height:26.03px;line-height:24.03px">230.5</div><div class="c" style="left:336.23px;width:54.93px;height:26.03px;line-height:24.03px">230.8</div><div class="c" style="left:391.16px;width:54.93px;height:26.03px;line-height:24.03px">400.2</div><div class="c" style="left:446.09px;width:54.93px;height:26.03px;line-height:24.03px">399.4</div><div class="c" style="left:501.02px;width:54.93px;height:26.03px;line-height:24.03px">400.5</div><div class="c" style="left:555.95px;width:54.93px;height:26.03px;line-height:24.03px">1825.6</div><div class="c" style="left:610.88px;width:54.93px;height:26.03px;line-height:24.03px">1879.2</div><div class="c" style="left:665.81px;width:54.93px;height:26.03px;line-height:24.03px">1828</div><div class="c" style="left:720.74px;width:54.93px;height:26.03px;line-height:24.03px">1185...</div><div class="c" style="left:775.67px;width:54.93px;height:26.03px;line-height:24.03px">477.38</div><div class="c" style="left:830.6px;width:55.93px;height:26.03px;line-height:24.03px">0.93</div></div>
<div class="row " style="top:313.33px;height:26.03px"><div class="c c0" style="left:0px;width:64.0px;height:26.03px;line-height:24.03px">预处理...</div><div class="c" style="left:64.0px;width:105.0px;height:26.03px;line-height:24.03px">2023-03-15 00...</div><div class="c" style="left:169.0px;width:56.2px;height:26.03px;line-height:24.03px">2173...</div><div class="c" style="left:225.2px;width:56.1px;height:26.03px;line-height:24.03px">231.7</div><div class="c" style="left:281.3px;width:54.93px;height:26.03px;line-height:24.03px">230.6</div><div class="c" style="left:336.23px;width:54.93px;height:26.03px;line-height:24.03px">230.9</div><div class="c" style="left:391.16px;width:54.93px;height:26.03px;line-height:24.03px">400.3</div><div class="c" style="left:446.09px;width:54.93px;height:26.03px;line-height:24.03px">399.6</div><div class="c" style="left:501.02px;width:54.93px;height:26.03px;line-height:24.03px">400.6</div><div class="c" style="left:555.95px;width:54.93px;height:26.03px;line-height:24.03px">1820.8</div><div class="c" style="left:610.88px;width:54.93px;height:26.03px;line-height:24.03px">1881.6</div><div class="c" style="left:665.81px;width:54.93px;height:26.03px;line-height:24.03px">1828.8</div><div class="c" style="left:720.74px;width:54.93px;height:26.03px;line-height:24.03px">1186...</div><div class="c" style="left:775.67px;width:54.93px;height:26.03px;line-height:24.03px">481.48</div><div class="c" style="left:830.6px;width:55.93px;height:26.03px;line-height:24.03px">0.93</div></div>
<div class="row " style="top:339.36px;height:26.03px"><div class="c c0" style="left:0px;width:64.0px;height:26.03px;line-height:24.03px">预处理...</div><div class="c" style="left:64.0px;width:105.0px;height:26.03px;line-height:24.03px">2023-03-15 00...</div><div class="c" style="left:169.0px;width:56.2px;height:26.03px;line-height:24.03px">2173...</div><div class="c" style="left:225.2px;width:56.1px;height:26.03px;line-height:24.03px">232</div><div class="c" style="left:281.3px;width:54.93px;height:26.03px;line-height:24.03px">230.8</div><div class="c" style="left:336.23px;width:54.93px;height:26.03px;line-height:24.03px">231.2</div><div class="c" style="left:391.16px;width:54.93px;height:26.03px;line-height:24.03px">400.7</div><div class="c" style="left:446.09px;width:54.93px;height:26.03px;line-height:24.03px">400.1</div><div class="c" style="left:501.02px;width:54.93px;height:26.03px;line-height:24.03px">401.1</div><div class="c" style="left:555.95px;width:54.93px;height:26.03px;line-height:24.03px">1784.8</div><div class="c" style="left:610.88px;width:54.93px;height:26.03px;line-height:24.03px">1842.4</div><div class="c" style="left:665.81px;width:54.93px;height:26.03px;line-height:24.03px">1790.4</div><div class="c" style="left:720.74px;width:54.93px;height:26.03px;line-height:24.03px">1157...</div><div class="c" style="left:775.67px;width:54.93px;height:26.03px;line-height:24.03px">480.3</div><div class="c" style="left:830.6px;width:55.93px;height:26.03px;line-height:24.03px">0.92</div></div>
<div class="row " style="top:365.39px;height:26.03px"><div class="c c0" style="left:0px;width:64.0px;height:26.03px;line-height:24.03px">预处理...</div><div class="c" style="left:64.0px;width:105.0px;height:26.03px;line-height:24.03px">2023-03-15 00...</div><div class="c" style="left:169.0px;width:56.2px;height:26.03px;line-height:24.03px">2173...</div><div class="c" style="left:225.2px;width:56.1px;height:26.03px;line-height:24.03px">231.9</div><div class="c" style="left:281.3px;width:54.93px;height:26.03px;line-height:24.03px">230.7</div><div class="c" style="left:336.23px;width:54.93px;height:26.03px;line-height:24.03px">231.1</div><div class="c" style="left:391.16px;width:54.93px;height:26.03px;line-height:24.03px">400.6</div><div class="c" style="left:446.09px;width:54.93px;height:26.03px;line-height:24.03px">399.9</div><div class="c" style="left:501.02px;width:54.93px;height:26.03px;line-height:24.03px">400.9</div><div class="c" style="left:555.95px;width:54.93px;height:26.03px;line-height:24.03px">1821.6</div><div class="c" style="left:610.88px;width:54.93px;height:26.03px;line-height:24.03px">1882.4</div><div class="c" style="left:665.81px;width:54.93px;height:26.03px;line-height:24.03px">1832</div><div class="c" style="left:720.74px;width:54.93px;height:26.03px;line-height:24.03px">1187.1</div><div class="c" style="left:775.67px;width:54.93px;height:26.03px;line-height:24.03px">478.72</div><div class="c" style="left:830.6px;width:55.93px;height:26.03px;line-height:24.03px">0.93</div></div>
<div class="row " style="top:391.42px;height:26.03px"><div class="c c0" style="left:0px;width:64.0px;height:26.03px;line-height:24.03px">预处理...</div><div class="c" style="left:64.0px;width:105.0px;height:26.03px;line-height:24.03px">2023-03-15 00...</div><div class="c" style="left:169.0px;width:56.2px;height:26.03px;line-height:24.03px">2173...</div><div class="c" style="left:225.2px;width:56.1px;height:26.03px;line-height:24.03px">231.8</div><div class="c" style="left:281.3px;width:54.93px;height:26.03px;line-height:24.03px">230.6</div><div class="c" style="left:336.23px;width:54.93px;height:26.03px;line-height:24.03px">231</div><div class="c" style="left:391.16px;width:54.93px;height:26.03px;line-height:24.03px">400.4</div><div class="c" style="left:446.09px;width:54.93px;height:26.03px;line-height:24.03px">399.7</div><div class="c" style="left:501.02px;width:54.93px;height:26.03px;line-height:24.03px">400.7</div><div class="c" style="left:555.95px;width:54.93px;height:26.03px;line-height:24.03px">1800.8</div><div class="c" style="left:610.88px;width:54.93px;height:26.03px;line-height:24.03px">1863.2</div><div class="c" style="left:665.81px;width:54.93px;height:26.03px;line-height:24.03px">1812.8</div><div class="c" style="left:720.74px;width:54.93px;height:26.03px;line-height:24.03px">1174...</div><div class="c" style="left:775.67px;width:54.93px;height:26.03px;line-height:24.03px">477.17</div><div class="c" style="left:830.6px;width:55.93px;height:26.03px;line-height:24.03px">0.93</div></div>
<div class="row " style="top:417.45px;height:26.03px"><div class="c c0" style="left:0px;width:64.0px;height:26.03px;line-height:24.03px">预处理...</div><div class="c" style="left:64.0px;width:105.0px;height:26.03px;line-height:24.03px">2023-03-15 01...</div><div class="c" style="left:169.0px;width:56.2px;height:26.03px;line-height:24.03px">2173...</div><div class="c" style="left:225.2px;width:56.1px;height:26.03px;line-height:24.03px">232.1</div><div class="c" style="left:281.3px;width:54.93px;height:26.03px;line-height:24.03px">231</div><div class="c" style="left:336.23px;width:54.93px;height:26.03px;line-height:24.03px">231.3</div><div class="c" style="left:391.16px;width:54.93px;height:26.03px;line-height:24.03px">401</div><div class="c" style="left:446.09px;width:54.93px;height:26.03px;line-height:24.03px">400.3</div><div class="c" style="left:501.02px;width:54.93px;height:26.03px;line-height:24.03px">401.3</div><div class="c" style="left:555.95px;width:54.93px;height:26.03px;line-height:24.03px">1805.6</div><div class="c" style="left:610.88px;width:54.93px;height:26.03px;line-height:24.03px">1864.8</div><div class="c" style="left:665.81px;width:54.93px;height:26.03px;line-height:24.03px">1812</div><div class="c" style="left:720.74px;width:54.93px;height:26.03px;line-height:24.03px">1173...</div><div class="c" style="left:775.67px;width:54.93px;height:26.03px;line-height:24.03px">481.11</div><div class="c" style="left:830.6px;width:55.93px;height:26.03px;line-height:24.03px">0.92</div></div>
<div class="row " style="top:443.48px;height:26.03px"><div class="c c0" style="left:0px;width:64.0px;height:26.03px;line-height:24.03px">预处理...</div><div class="c" style="left:64.0px;width:105.0px;height:26.03px;line-height:24.03px">2023-03-15 01...</div><div class="c" style="left:169.0px;width:56.2px;height:26.03px;line-height:24.03px">2173...</div><div class="c" style="left:225.2px;width:56.1px;height:26.03px;line-height:24.03px">232.1</div><div class="c" style="left:281.3px;width:54.93px;height:26.03px;line-height:24.03px">230.9</div><div class="c" style="left:336.23px;width:54.93px;height:26.03px;line-height:24.03px">231.3</div><div class="c" style="left:391.16px;width:54.93px;height:26.03px;line-height:24.03px">400.9</div><div class="c" style="left:446.09px;width:54.93px;height:26.03px;line-height:24.03px">400.2</div><div class="c" style="left:501.02px;width:54.93px;height:26.03px;line-height:24.03px">401.3</div><div class="c" style="left:555.95px;width:54.93px;height:26.03px;line-height:24.03px">1803.2</div><div class="c" style="left:610.88px;width:54.93px;height:26.03px;line-height:24.03px">1861.6</div><div class="c" style="left:665.81px;width:54.93px;height:26.03px;line-height:24.03px">1812</div><div class="c" style="left:720.74px;width:54.93px;height:26.03px;line-height:24.03px">1173...</div><div class="c" style="left:775.67px;width:54.93px;height:26.03px;line-height:24.03px">478.37</div><div class="c" style="left:830.6px;width:55.93px;height:26.03px;line-height:24.03px">0.93</div></div>
<div class="row " style="top:469.51px;height:26.03px"><div class="c c0" style="left:0px;width:64.0px;height:26.03px;line-height:24.03px">预处理...</div><div class="c" style="left:64.0px;width:105.0px;height:26.03px;line-height:24.03px">2023-03-15 01...</div><div class="c" style="left:169.0px;width:56.2px;height:26.03px;line-height:24.03px">2173...</div><div class="c" style="left:225.2px;width:56.1px;height:26.03px;line-height:24.03px">232</div><div class="c" style="left:281.3px;width:54.93px;height:26.03px;line-height:24.03px">230.7</div><div class="c" style="left:336.23px;width:54.93px;height:26.03px;line-height:24.03px">231.1</div><div class="c" style="left:391.16px;width:54.93px;height:26.03px;line-height:24.03px">400.7</div><div class="c" style="left:446.09px;width:54.93px;height:26.03px;line-height:24.03px">399.9</div><div class="c" style="left:501.02px;width:54.93px;height:26.03px;line-height:24.03px">401</div><div class="c" style="left:555.95px;width:54.93px;height:26.03px;line-height:24.03px">1819.2</div><div class="c" style="left:610.88px;width:54.93px;height:26.03px;line-height:24.03px">1874.4</div><div class="c" style="left:665.81px;width:54.93px;height:26.03px;line-height:24.03px">1822.4</div><div class="c" style="left:720.74px;width:54.93px;height:26.03px;line-height:24.03px">1182...</div><div class="c" style="left:775.67px;width:54.93px;height:26.03px;line-height:24.03px">478.1</div><div class="c" style="left:830.6px;width:55.93px;height:26.03px;line-height:24.03px">0.93</div></div>
<div class="row " style="top:495.54px;height:26.03px"><div class="c c0" style="left:0px;width:64.0px;height:26.03px;line-height:24.03px">预处理...</div><div class="c" style="left:64.0px;width:105.0px;height:26.03px;line-height:24.03px">2023-03-15 01...</div><div class="c" style="left:169.0px;width:56.2px;height:26.03px;line-height:24.03px">2173...</div><div class="c" style="left:225.2px;width:56.1px;height:26.03px;line-height:24.03px">231.8</div><div class="c" style="left:281.3px;width:54.93px;height:26.03px;line-height:24.03px">230.7</div><div class="c" style="left:336.23px;width:54.93px;height:26.03px;line-height:24.03px">231</div><div class="c" style="left:391.16px;width:54.93px;height:26.03px;line-height:24.03px">400.5</div><div class="c" style="left:446.09px;width:54.93px;height:26.03px;line-height:24.03px">399.8</div><div class="c" style="left:501.02px;width:54.93px;height:26.03px;line-height:24.03px">400.7</div><div class="c" style="left:555.95px;width:54.93px;height:26.03px;line-height:24.03px">1817.6</div><div class="c" style="left:610.88px;width:54.93px;height:26.03px;line-height:24.03px">1876</div><div class="c" style="left:665.81px;width:54.93px;height:26.03px;line-height:24.03px">1819.2</div><div class="c" style="left:720.74px;width:54.93px;height:26.03px;line-height:24.03px">1180...</div><div class="c" style="left:775.67px;width:54.93px;height:26.03px;line-height:24.03px">481.6</div><div class="c" style="left:830.6px;width:55.93px;height:26.03px;line-height:24.03px">0.93</div></div>
</div>
<!--/TBL--><div class="abs hscroll"></div>
<div class="abs vscroll"></div>
<div class="abs bbar"></div>
</body></html>
